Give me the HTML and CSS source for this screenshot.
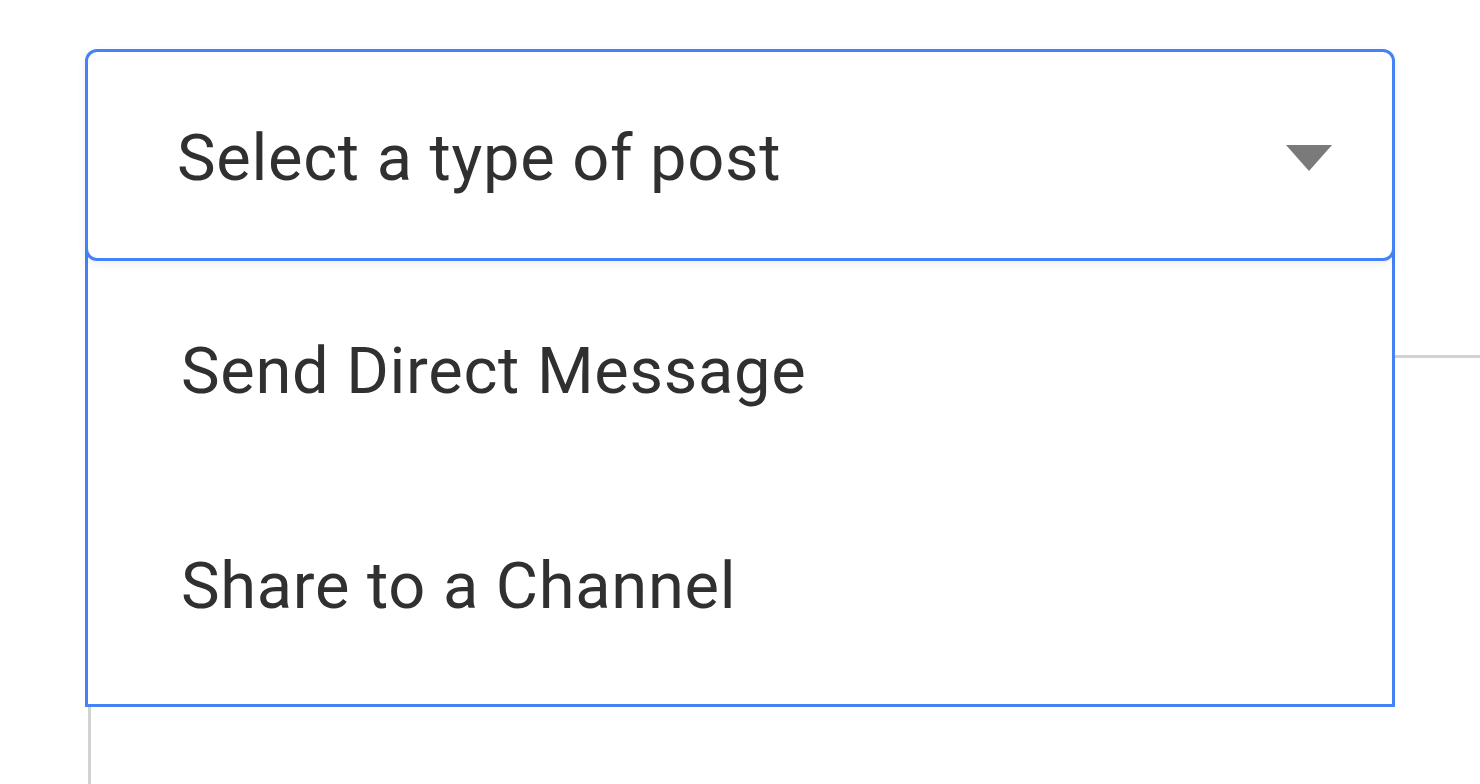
FILE: index.html
```html
<!DOCTYPE html>
<html lang="en">
<head>
<meta charset="utf-8">
<title>Select a type of post</title>
<link rel="stylesheet" href="styles.css">
</head>
<body>
<div class="page">
  <div class="field">
    <div class="select">
      <span class="select-label">Select a type of post</span>
      <svg class="caret" width="46" height="26" viewBox="0 0 46 26" aria-hidden="true"><path d="M0 0 H46 L23 26 Z" fill="#7a7a7a"/></svg>
    </div>
    <ul class="menu">
      <li class="menu-item">Send Direct Message</li>
      <li class="menu-item">Share to a Channel</li>
    </ul>
  </div>
  <div class="card"></div>
</div>
</body>
</html>
```
FILE: styles.css
```css
html, body {
  margin: 0;
  padding: 0;
  background: #ffffff;
  overflow: hidden;
}

.page {
  width: 1480px;
  height: 784px;
  overflow: hidden;
  padding: 49px 0 0 85px;
  box-sizing: border-box;
  font-family: Roboto, "Noto Sans", "Liberation Sans", sans-serif;
  color: #303030;
}

.field {
  position: relative;
  width: 1310px;
  z-index: 2;
}

.select {
  position: relative;
  z-index: 2;
  height: 212px;
  box-sizing: border-box;
  border: 3px solid #4482f6;
  border-radius: 12px;
  background: #ffffff;
  box-shadow: 0 3px 10px rgba(0, 0, 0, 0.07);
  display: flex;
  align-items: center;
  justify-content: space-between;
  padding: 6px 60px 0 89px;
}

.select-label {
  font-size: 65px;
  letter-spacing: 0.7px;
  line-height: 1;
}

.caret {
  display: block;
}

.menu {
  position: absolute;
  left: 0;
  right: 0;
  top: calc(100% - 14px);
  margin: 0;
  padding: 17px 0 10px 0;
  list-style: none;
  background: #ffffff;
  border: 3px solid #4482f6;
  border-top: none;
  z-index: 1;
}

.menu-item {
  height: 215px;
  display: flex;
  align-items: center;
  padding-left: 93px;
  font-size: 65px;
  letter-spacing: 0.7px;
  line-height: 1;
}

.card {
  margin: 94px 0 0 3px;
  height: 600px;
  width: 1600px;
  border: 3px solid #d2d2d2;
  border-right: none;
  box-sizing: border-box;
}
```
